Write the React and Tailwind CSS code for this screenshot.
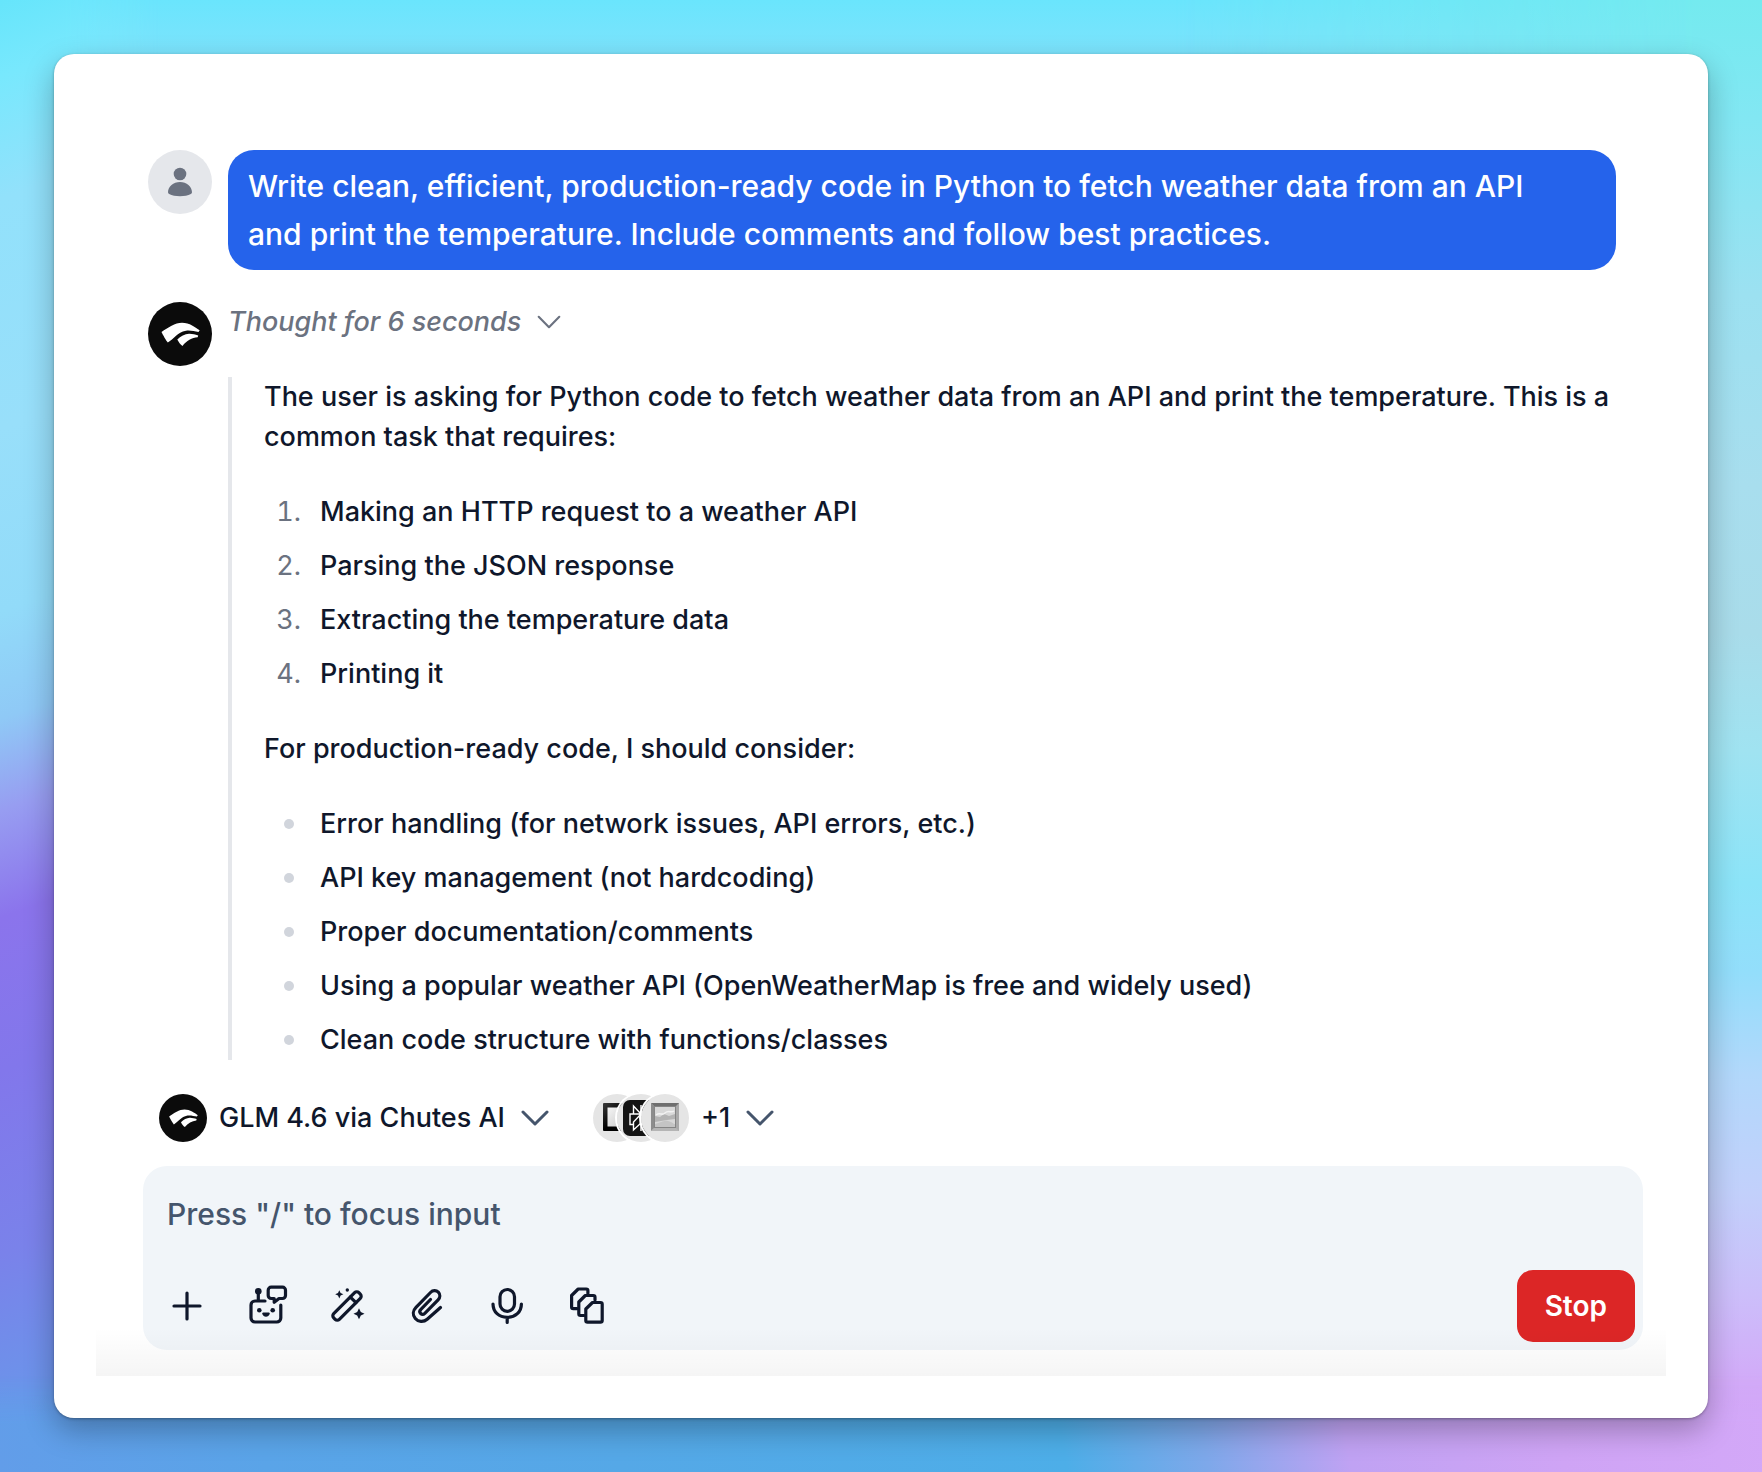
import { useState } from 'react';

const STEPS = [
  'Making an HTTP request to a weather API',
  'Parsing the JSON response',
  'Extracting the temperature data',
  'Printing it',
];

const CONSIDERATIONS = [
  'Error handling (for network issues, API errors, etc.)',
  'API key management (not hardcoding)',
  'Proper documentation/comments',
  'Using a popular weather API (OpenWeatherMap is free and widely used)',
  'Clean code structure with functions/classes',
];

const stroke = {
  fill: 'none',
  stroke: 'currentColor',
  strokeWidth: 3.2,
  strokeLinecap: 'round',
  strokeLinejoin: 'round',
};

function Chevron({ className, width = 3 }) {
  return (
    <svg viewBox="0 0 28 16" className={className} {...stroke} strokeWidth={width} aria-hidden="true">
      <path d="M2 2l12 12L26 2" />
    </svg>
  );
}

function UserAvatar() {
  return (
    <svg viewBox="0 0 64 64" className="size-16 shrink-0" aria-hidden="true">
      <circle cx="32" cy="32" r="32" fill="#e5e7eb" />
      <circle cx="32" cy="24" r="6.3" fill="#6b7280" />
      <path fill="#6b7280" d="M20 42.2C20 36.600 25.400 32 32 32s12 4.600 12 10.200c0 .8-.4 1.500-1.100 1.900C40 45.600 36.200 46.300 32 46.300s-8-.7-10.900-2.200c-.7-.4-1.100-1.100-1.100-1.900z" />
    </svg>
  );
}

function ModelLogo({ className }) {
  return (
    <svg viewBox="0 0 64 64" className={className} aria-hidden="true">
      <circle cx="32" cy="32" r="32" fill="#0b0b0b" />
      <path fill="#fff" d="M13.500 30C20 25.500 27 20.700 34 20.700c7.500 0 13.500 4.600 17.700 7.600L50.500 30c-4-.5-8.500-1.900-12.500-1.200C29 30.500 26 37 19.800 40.500 18 38.500 15 33 13.500 30z" />
      <path fill="#fff" d="M29.300 37.500c3.200-3 7.700-5.600 11.700-5.700 3.500-.1 6 1 9.200 1.600l-.5 1.800C44 35.800 38.500 38.500 34.500 44c-2-1.500-4-4-5.200-6.500z" />
    </svg>
  );
}

function PlusIcon() {
  return (
    <svg viewBox="0 0 40 40" className="size-10" {...stroke}>
      <path d="M20 7v26M7 20h26" />
    </svg>
  );
}

function RobotIcon() {
  return (
    <svg viewBox="0 0 40 40" className="size-10 overflow-visible" {...stroke}>
      <path d="M18 15H8a4 4 0 0 0-4 4v13a4 4 0 0 0 4 4h21.800a4 4 0 0 0 4-4V19" />
      <path d="M11.300 14V6" />
      <path d="M24.200 1.200h11.300a3 3 0 0 1 3 3v5.300a3 3 0 0 1-3 3H32l-4.800 3.800v-3.800h-3a3 3 0 0 1-3-3V4.200a3 3 0 0 1 3-3z" />
      <g fill="currentColor" stroke="none">
        <circle cx="11.300" cy="5.300" r="3.300" />
        <circle cx="12.300" cy="24.300" r="2.300" />
        <circle cx="25.700" cy="24.300" r="2.300" />
        <path d="M16.200 26.600h5.600c.8 0 1.200.8.9 1.500-.6 1.600-2 2.700-3.700 2.700s-3.100-1.100-3.700-2.700c-.3-.7.1-1.500.9-1.500z" />
      </g>
    </svg>
  );
}

function WandIcon() {
  return (
    <svg viewBox="0 0 40 40" className="size-10" {...stroke}>
      <g transform="rotate(-45 20 20)">
        <rect x="2.200" y="16" width="35.600" height="8" rx="3" />
        <path d="M28.700 16v8" />
      </g>
      <g fill="currentColor" stroke="none">
        <path d="M12.300 4.200l1.300 2.800 2.800 1.300-2.800 1.300-1.300 2.800-1.300-2.800-2.800-1.300L11 7z" />
        <circle cx="20.300" cy="4" r="1.700" />
        <path d="M32 22.200l1.800 3.700 3.700 1.800-3.700 1.800L32 33.200l-1.800-3.700-3.700-1.800 3.700-1.800z" />
      </g>
    </svg>
  );
}

function ClipIcon() {
  return (
    <svg viewBox="0 0 40 40" className="size-10" {...stroke}>
      <path d="M33.500 21.500L20.200 33.200C16.500 36.500 11.200 36 8.300 32.500c-2.900-3.400-2.500-8 .7-11.200L23.500 6.500c2.300-2.300 5.700-2.400 7.800-.3 2.100 2.200 2 5.400-.2 7.700L17.800 27.300c-1.300 1.300-3 1.300-4.200.2-1.100-1.200-1-2.900.3-4.200L23.500 13.500" />
    </svg>
  );
}

function MicIcon() {
  return (
    <svg viewBox="0 0 40 40" className="size-10" {...stroke}>
      <rect x="13" y="3.500" width="14.500" height="21.800" rx="7.200" />
      <path d="M6 18c0 8 6 13.300 14.200 13.300S34.400 26 34.400 18M20.200 31.500v5" />
    </svg>
  );
}

function PagesIcon() {
  return (
    <svg viewBox="0 0 40 40" className="size-10" {...stroke}>
      <path d="M25.500 16.500h8a1.700 1.700 0 0 1 1.700 1.700v16.300a1.700 1.700 0 0 1-1.700 1.700h-13a1.700 1.700 0 0 1-1.700-1.700V23z" />
      <path d="M17 29.500h-3.500a1.700 1.700 0 0 1-1.700-1.700V16l6.500-6.500h8a1.700 1.700 0 0 1 1.700 1.700V14" />
      <path d="M10 22.700H6.300A1.700 1.700 0 0 1 4.600 21V9.500L11.200 3h8a1.700 1.700 0 0 1 1.700 1.700V7.500" />
    </svg>
  );
}

// Greyed-out plugin badges, stacked from left to right
function FrameBadge() {
  return (
    <svg viewBox="0 0 48 48" className="size-12 rounded-full ring-2 ring-white" aria-hidden="true">
      <defs>
        <linearGradient id="frame" x1="0" y1="0" x2="1" y2="1">
          <stop offset="0" stopColor="#3a3a3a" />
          <stop offset=".5" stopColor="#000" />
        </linearGradient>
        <linearGradient id="pane" x1="0" y1="0" x2="1" y2="1">
          <stop offset="0" stopColor="#f5f5f5" />
          <stop offset="1" stopColor="#c8c8c8" />
        </linearGradient>
      </defs>
      <rect width="48" height="48" fill="#e5e5e5" />
      <rect x="10" y="9" width="28" height="28" rx="1" fill="url(#frame)" />
      <rect x="14.500" y="13.500" width="19" height="19" fill="url(#pane)" />
    </svg>
  );
}

function SearchBadge() {
  return (
    <svg viewBox="0 0 48 48" className="-ml-6 size-12 rounded-full ring-2 ring-white" aria-hidden="true">
      <rect width="48" height="48" fill="#e5e5e5" />
      <rect x="6" y="6" width="36" height="36" rx="7" fill="#141414" />
      <g fill="none" stroke="#fff" strokeWidth="1.400">
        <path d="M24 11v26M24 20l-7.500-8v8M24 20l7.500-8v8M16.500 20h-3.500v10.500h3.500M31.500 20h3.500v10.500h-3.500M24 20l-7.500 8v8l7.500-7M24 20l7.500 8v8L24 29M16.500 20h15" />
      </g>
    </svg>
  );
}

function PictureBadge() {
  return (
    <svg viewBox="0 0 48 48" className="-ml-6 size-12 rounded-full ring-2 ring-white" aria-hidden="true">
      <rect width="48" height="48" fill="#e5e5e5" />
      <rect x="10" y="9" width="28" height="28" fill="#a9a9a9" />
      <path d="M10 9h28l-3 3H13z" fill="#6f6f6f" />
      <path d="M10 9l3 3v22l-3 3z" fill="#8c8c8c" />
      <path d="M10 37h28l-3-3H13z" fill="#b5b5b5" />
      <rect x="13.500" y="12.500" width="21" height="21" fill="#d8d8d8" stroke="#858585" />
      <path d="M14 22l5 1 4-3 5 2 6-2v5l-8 1-12 2z" fill="#b4b4b4" />
      <path d="M15 21c4-3 6 1 9-2s6 0 9-2" fill="none" stroke="#f2f2f2" strokeWidth="1.500" />
      <path d="M14 30c6-1 8-4 13-3s5 3 7 3v3H14z" fill="#c4c4c4" />
    </svg>
  );
}

const TOOLS = [
  { label: 'Add', Icon: PlusIcon },
  { label: 'AI agents', Icon: RobotIcon },
  { label: 'Prompts', Icon: WandIcon },
  { label: 'Attach file', Icon: ClipIcon },
  { label: 'Voice input', Icon: MicIcon },
  { label: 'Canvas', Icon: PagesIcon },
];

function Wallpaper() {
  return (
    <div className="absolute inset-0 -z-10 overflow-hidden" aria-hidden="true">
      <div className="absolute inset-0 bg-[linear-gradient(180deg,#6ae5fd_0%,#7ee3fc_4%,#8fdcf8_50%,#55a5e6_100%)]" />
      <div className="absolute inset-y-0 left-0 w-40 bg-[linear-gradient(160deg,#66e5fb_0%,#78e8fd_5%,#92e1fb_13%,#98dffa_28%,#92dbf9_40%,#8fc9f6_47%,#979df1_53%,#8b74ec_60%,#8277eb_70%,#7a82ea_82%,#6b94ea_92%,#5ca2e8_100%)] [mask-image:linear-gradient(90deg,black_40%,transparent)]" />
      <div className="absolute inset-y-0 right-0 w-1/3 bg-[linear-gradient(180deg,#74eaef_0%,#82e7f3_8%,#9ce1f1_20%,#a8deee_33%,#a9dcea_43%,#a0e3f1_51%,#8ce4f8_60%,#93defb_66%,#b2d8fb_73%,#c2d0fb_81%,#ccbefa_88%,#d2aaf8_94%,#d1a3f5_100%)] [mask-image:linear-gradient(90deg,transparent,black_90%)]" />
      <div className="absolute inset-x-0 bottom-0 h-24 bg-[linear-gradient(80deg,#629de9_0%,#5aa4e8_15%,#55a8e7_35%,#4daee8_60%,#7ea8ea_68%,#c0a2f3_76%,#cfa4f5_88%,#d3a8f8_100%)] [mask-image:linear-gradient(180deg,transparent,black_50%)]" />
    </div>
  );
}

export default function App() {
  const [open, setOpen] = useState(true);
  const [text, setText] = useState('');

  return (
    <div className="relative isolate flex min-h-screen flex-col p-[54px] font-['Inter',sans-serif] font-medium text-slate-900">
      <Wallpaper />
      <main className="flex flex-1 flex-col rounded-[20px] bg-white p-[42px] shadow-[0_1px_3px_rgba(0,0,0,0.3),0_12px_30px_rgba(0,0,0,0.28)]">
        <div className="relative flex flex-1 flex-col pb-[26px] pt-[54px]">
          <section className="flex flex-col gap-8 pl-[52px] pr-[50px]">
            <div className="flex items-start gap-4">
              <UserAvatar />
              <p className="flex-1 rounded-[26px] bg-[#2563eb] py-3 pl-5 pr-10 text-[30px] leading-[48px] text-white">
                Write clean, efficient, production-ready code in Python to fetch weather data from an API and print the temperature. Include comments and follow best practices.
              </p>
            </div>

            <div className="flex items-start gap-4">
              <ModelLogo className="size-16 shrink-0" />
              <div className="min-w-0 flex-1">
                <button type="button" onClick={() => setOpen(!open)} aria-expanded={open}
                  className="flex items-center gap-4 text-[27px] leading-10 text-[#6b7280] italic">
                  Thought for 6 seconds
                  <Chevron className="h-4 w-6" width={2.5} />
                </button>

                {open && (
                  <div className="mt-[35px] flex flex-col gap-[35px] border-l-4 border-gray-200 pl-8 text-[27px] leading-10">
                    <p>
                      The user is asking for Python code to fetch weather data from an API and print the temperature. This is a common task that requires:
                    </p>
                    <ol className="flex flex-col gap-3.5">
                      {STEPS.map((step, i) => (
                        <li key={step} className="flex gap-[19px]">
                          <span className="w-[37px] text-right font-normal text-[#6b7280] tabular-nums">{i + 1}.</span>
                          {step}
                        </li>
                      ))}
                    </ol>
                    <p>For production-ready code, I should consider:</p>
                    <ul className="flex flex-col gap-3.5">
                      {CONSIDERATIONS.map((item) => (
                        <li key={item} className="flex items-center gap-[26px]">
                          <span className="ml-5 size-2.5 rounded-full bg-gray-300" />
                          {item}
                        </li>
                      ))}
                    </ul>
                  </div>
                )}
              </div>
            </div>
          </section>

          <section className="mt-auto pl-[47px] pr-[23px] pt-[34px]">
            <div className="flex items-center gap-11 pl-4 text-[27px]">
              <button type="button" className="flex h-12 items-center gap-3">
                <ModelLogo className="size-12" />
                GLM 4.6 via Chutes AI
                <Chevron className="ml-1 h-4 w-7 text-slate-600" />
              </button>
              <button type="button" className="flex h-12 items-center gap-3">
                <span className="flex">
                  <FrameBadge />
                  <SearchBadge />
                  <PictureBadge />
                </span>
                +1
                <Chevron className="ml-1 h-4 w-7 text-slate-600" />
              </button>
            </div>

            <form onSubmit={(e) => e.preventDefault()} className="mt-6 rounded-3xl bg-slate-100 pb-2 pl-6 pr-2 pt-6">
              <textarea rows={1} value={text} onChange={(e) => setText(e.target.value)} aria-label="Message"
                placeholder={'Press "/" to focus input'}
                className="block h-12 w-full resize-none bg-transparent text-[30px] leading-[48px] placeholder:text-slate-600 focus:outline-none" />
              <div className="mt-8 flex items-center justify-between">
                <div className="flex gap-10">
                  {TOOLS.map(({ label, Icon }) => (
                    <button key={label} type="button" aria-label={label}><Icon /></button>
                  ))}
                </div>
                <button type="button" className="h-[72px] rounded-2xl bg-[#dc2626] px-7 text-[28px] font-semibold text-white">Stop</button>
              </div>
            </form>
          </section>

          <div className="pointer-events-none absolute inset-x-0 bottom-0 h-12 bg-linear-to-b from-transparent to-black/4" />
        </div>
      </main>
    </div>
  );
}
